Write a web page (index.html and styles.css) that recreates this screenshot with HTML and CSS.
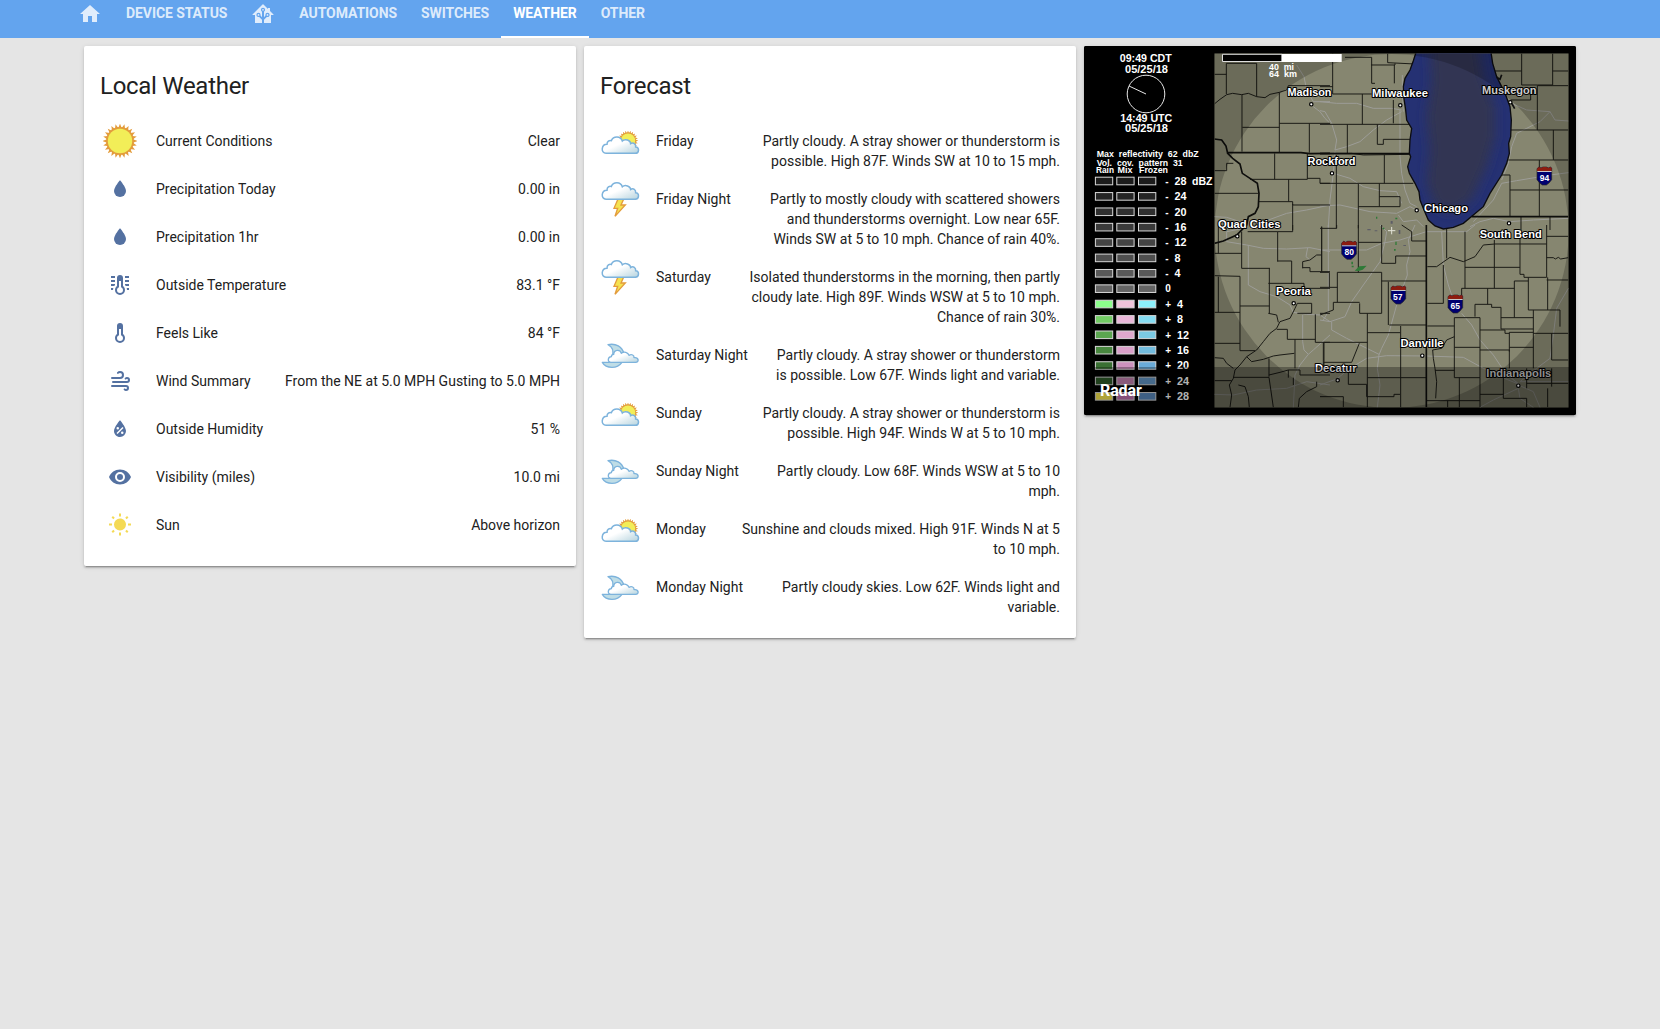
FILE: index.html
```html
<!DOCTYPE html>
<html lang="en">
<head>
<meta charset="utf-8">
<title>Home</title>
<link rel="stylesheet" href="styles.css">
</head>
<body>
<svg class="sprite" width="0" height="0" aria-hidden="true">
  <defs>
    <linearGradient id="cloudFill" x1="0" y1="0" x2="1" y2="1">
      <stop offset=".45" stop-color="#fff"/><stop offset="1" stop-color="#b5d3de"/>
    </linearGradient>
    <symbol id="water" viewBox="0 0 24 24"><path d="M12,20A6,6 0 0,1 6,14C6,10 12,3.25 12,3.25C12,3.25 18,10 18,14A6,6 0 0,1 12,20Z"/></symbol>
    <symbol id="thermometer" viewBox="0 0 24 24"><path d="M17,17A5,5 0 0,1 12,22A5,5 0 0,1 7,17C7,15.36 7.79,13.91 9,13V5A3,3 0 0,1 12,2A3,3 0 0,1 15,5V13C16.21,13.91 17,15.36 17,17M11,8V14.17C9.83,14.58 9,15.69 9,17A3,3 0 0,0 12,20A3,3 0 0,0 15,17C15,15.69 14.17,14.58 13,14.17V8H11Z"/></symbol>
    <symbol id="thermometer-lines" viewBox="0 0 24 24"><use href="#thermometer" width="24" height="24"/><path d="M3,3H7V5H3ZM3,7H7V9H3ZM3,11H7V12.1L6.2,13H3ZM3,15H5.3L5,17H3ZM17,3H21V5H17ZM17,7H21V9H17ZM17,11H21V13H17.8L17,12.1ZM18.7,15H21V17H19Z"/></symbol>
    <symbol id="wind" viewBox="0 0 24 24"><path d="M4,10A1,1 0 0,1 3,9A1,1 0 0,1 4,8H12A2,2 0 0,0 14,6A2,2 0 0,0 12,4C11.45,4 10.95,4.22 10.59,4.59C10.2,5 9.56,5 9.17,4.59C8.78,4.2 8.78,3.56 9.17,3.17C9.9,2.45 10.9,2 12,2A4,4 0 0,1 16,6A4,4 0 0,1 12,10H4M19,12A1,1 0 0,0 20,11A1,1 0 0,0 19,10C18.72,10 18.47,10.11 18.29,10.29C17.9,10.68 17.27,10.68 16.88,10.29C16.5,9.9 16.5,9.27 16.88,8.88C17.42,8.34 18.17,8 19,8A3,3 0 0,1 22,11A3,3 0 0,1 19,14H5A1,1 0 0,1 4,13A1,1 0 0,1 5,12H19M18,18H4A1,1 0 0,1 3,17A1,1 0 0,1 4,16H18A3,3 0 0,1 21,19A3,3 0 0,1 18,22C17.17,22 16.42,21.66 15.88,21.12C15.5,20.73 15.5,20.1 15.88,19.71C16.27,19.32 16.9,19.32 17.29,19.71C17.47,19.89 17.72,20 18,20A1,1 0 0,0 19,19A1,1 0 0,0 18,18Z"/></symbol>
    <symbol id="humidity" viewBox="0 0 24 24"><path fill-rule="evenodd" d="M12,3.25C12,3.25 6,10 6,14C6,17.32 8.69,20 12,20A6,6 0 0,0 18,14C18,10 12,3.25 12,3.25M14.47,9.97L15.53,11.03L9.53,17.03L8.47,15.97M9.75,10A1.25,1.25 0 0,1 11,11.25A1.25,1.25 0 0,1 9.75,12.5A1.25,1.25 0 0,1 8.5,11.25A1.25,1.25 0 0,1 9.75,10M14.25,14.5A1.25,1.25 0 0,1 15.5,15.75A1.25,1.25 0 0,1 14.25,17A1.25,1.25 0 0,1 13,15.75A1.25,1.25 0 0,1 14.25,14.5Z"/></symbol>
    <symbol id="eye" viewBox="0 0 24 24"><path d="M12,9A3,3 0 0,0 9,12A3,3 0 0,0 12,15A3,3 0 0,0 15,12A3,3 0 0,0 12,9M12,17A5,5 0 0,1 7,12A5,5 0 0,1 12,7A5,5 0 0,1 17,12A5,5 0 0,1 12,17M12,4.5C7,4.5 2.73,7.61 1,12C2.73,16.39 7,19.5 12,19.5C17,19.5 21.27,16.39 23,12C21.27,7.61 17,4.5 12,4.5Z"/></symbol>
    <symbol id="sun" viewBox="0 0 24 24"><path d="M3.55,18.54L4.96,19.95L6.76,18.16L5.34,16.74M11,22.45C11.32,22.45 13,22.45 13,22.45V19.5H11M12,5.5A6,6 0 0,0 6,11.5A6,6 0 0,0 12,17.5A6,6 0 0,0 18,11.5C18,8.18 15.31,5.5 12,5.5M20,12.5H23V10.5H20M17.24,18.16L19.04,19.95L20.45,18.54L18.66,16.74M20.45,4.46L19.04,3.05L17.24,4.84L18.66,6.26M13,0.55H11V3.5H13M4,10.5H1V12.5H4M6.76,4.84L4.96,3.05L3.55,4.46L5.34,6.26L6.76,4.84Z"/></symbol>
    <symbol id="burst" viewBox="-50 -50 100 100">
      <circle r="41" fill="#e39c3c"/>
      <g fill="#e39c3c"><path id="ray" d="M-5 -38L0 -51L5 -38ZM-5 38L0 51L5 38ZM-38 -5L-51 0L-38 5ZM38 -5L51 0L38 5Z"/><use href="#ray" transform="rotate(15)"/><use href="#ray" transform="rotate(30)"/><use href="#ray" transform="rotate(45)"/><use href="#ray" transform="rotate(60)"/><use href="#ray" transform="rotate(75)"/></g>
      <circle r="36" fill="#f2ee58"/>
    </symbol>
    <symbol id="cloud" viewBox="0 0 120 120"><path d="M18 97C2 97 3 70 21 70C21 61 28 57 34 59C40 44 62 44 67 60C75 52 92 58 92 68C100 63 108 69 107 78C119 78 118 97 106 97Z" fill="url(#cloudFill)" stroke="#7db3dc" stroke-width="4.500"/></symbol>
    <symbol id="partly" viewBox="0 0 120 120"><use href="#burst" x="54" y="29" width="60" height="60"/><use href="#cloud" width="120" height="120"/></symbol>
    <symbol id="storm" viewBox="0 0 120 120"><path d="M55 58L42 88H53L45 112L76 78H63L72 58Z" fill="#f5e350" stroke="#e39c3c" stroke-width="4"/><use href="#cloud" y="-36.500" width="120" height="120"/></symbol>
    <symbol id="night" viewBox="0 0 120 120"><g stroke="#7db3dc" stroke-width="4" stroke-linejoin="round"><path d="M24 29C48 24 66 35 72 56L36 66C42 50 38 36 24 29Z" fill="#bfdde6"/><path d="M7 82H66C58 93 48 97 36 97C22 97 12 91 7 82Z" fill="#bfdde6"/><path d="M33 82C22 82 22 66 34 65C34 60 38 58 41 58C42 44 60 42 64 55C72 48 84 52 87 61C95 56 103 61 102 68C117 66 118 82 107 82Z" fill="url(#cloudFill)"/></g></symbol>
  </defs>
</svg>

<header class="toolbar">
  <nav class="tabs">
    <a class="tab"><svg class="tab-icon" viewBox="0 0 24 24"><path d="M10,20V14H14V20H19V12H22L12,3L2,12H5V20H10Z"/></svg></a>
    <a class="tab">Device Status</a>
    <a class="tab"><svg class="tab-icon" viewBox="0 0 24 24"><path d="M21.8,13H20V21H13V17.67L15.79,14.88L16.5,15C17.66,15 18.6,14.06 18.6,12.9C18.6,11.74 17.66,10.8 16.5,10.8A2.1,2.1 0 0,0 14.4,12.9L14.5,13.61L13,15.13V9.65C13.66,9.29 14.1,8.6 14.1,7.8A2.1,2.1 0 0,0 12,5.7A2.1,2.1 0 0,0 9.9,7.8C9.9,8.6 10.34,9.29 11,9.65V15.13L9.5,13.61L9.6,12.9A2.1,2.1 0 0,0 7.5,10.8A2.1,2.1 0 0,0 5.4,12.9A2.1,2.1 0 0,0 7.5,15L8.21,14.88L11,17.67V21H4V13H2.25C1.83,13 1.42,13 1.42,12.79C1.43,12.57 1.85,12.15 2.28,11.72L11,3C11.33,2.67 11.67,2.33 12,2.33C12.33,2.33 12.67,2.67 13,3L17,7V6H19V9L21.78,11.78C22.18,12.18 22.59,12.59 22.6,12.8C22.6,13 22.2,13 21.8,13M7.5,12A0.9,0.9 0 0,1 8.4,12.9A0.9,0.9 0 0,1 7.5,13.8A0.9,0.9 0 0,1 6.6,12.9A0.9,0.9 0 0,1 7.5,12M16.5,12C17,12 17.4,12.4 17.4,12.9C17.4,13.4 17,13.8 16.5,13.8A0.9,0.9 0 0,1 15.6,12.9A0.9,0.9 0 0,1 16.5,12M12,6.9C12.5,6.9 12.9,7.3 12.9,7.8C12.9,8.3 12.5,8.7 12,8.7C11.5,8.7 11.1,8.3 11.1,7.8C11.1,7.3 11.5,6.9 12,6.9Z"/></svg></a>
    <a class="tab">Automations</a>
    <a class="tab">Switches</a>
    <a class="tab selected">Weather</a>
    <a class="tab">Other</a>
  </nav>
</header>

<main class="columns">
  <section class="card">
    <h1 class="card-title">Local Weather</h1>
    <div class="rows">
      <div class="row"><span class="badge"><svg class="picture burst"><use href="#burst"/></svg></span><span class="name">Current Conditions</span><span class="value">Clear</span></div>
      <div class="row"><span class="badge"><svg class="icon"><use href="#water"/></svg></span><span class="name">Precipitation Today</span><span class="value">0.00 in</span></div>
      <div class="row"><span class="badge"><svg class="icon"><use href="#water"/></svg></span><span class="name">Precipitation 1hr</span><span class="value">0.00 in</span></div>
      <div class="row"><span class="badge"><svg class="icon"><use href="#thermometer-lines"/></svg></span><span class="name">Outside Temperature</span><span class="value">83.1 °F</span></div>
      <div class="row"><span class="badge"><svg class="icon"><use href="#thermometer"/></svg></span><span class="name">Feels Like</span><span class="value">84 °F</span></div>
      <div class="row"><span class="badge"><svg class="icon"><use href="#wind"/></svg></span><span class="name">Wind Summary</span><span class="value">From the NE at 5.0 MPH Gusting to 5.0 MPH</span></div>
      <div class="row"><span class="badge"><svg class="icon"><use href="#humidity"/></svg></span><span class="name">Outside Humidity</span><span class="value">51 %</span></div>
      <div class="row"><span class="badge"><svg class="icon"><use href="#eye"/></svg></span><span class="name">Visibility (miles)</span><span class="value">10.0 mi</span></div>
      <div class="row"><span class="badge"><svg class="icon active"><use href="#sun"/></svg></span><span class="name">Sun</span><span class="value">Above horizon</span></div>
    </div>
  </section>

  <section class="card">
    <h1 class="card-title">Forecast</h1>
    <div class="rows">
      <div class="row"><span class="badge"><svg class="picture"><use href="#partly"/></svg></span><span class="name">Friday</span><span class="value">Partly cloudy. A stray shower or thunderstorm is<br>possible. High 87F. Winds SW at 10 to 15 mph.</span></div>
      <div class="row"><span class="badge"><svg class="picture"><use href="#storm"/></svg></span><span class="name">Friday Night</span><span class="value">Partly to mostly cloudy with scattered showers<br>and thunderstorms overnight. Low near 65F.<br>Winds SW at 5 to 10 mph. Chance of rain 40%.</span></div>
      <div class="row"><span class="badge"><svg class="picture"><use href="#storm"/></svg></span><span class="name">Saturday</span><span class="value">Isolated thunderstorms in the morning, then partly<br>cloudy late. High 89F. Winds WSW at 5 to 10 mph.<br>Chance of rain 30%.</span></div>
      <div class="row"><span class="badge"><svg class="picture"><use href="#night"/></svg></span><span class="name">Saturday Night</span><span class="value">Partly cloudy. A stray shower or thunderstorm<br>is possible. Low 67F. Winds light and variable.</span></div>
      <div class="row"><span class="badge"><svg class="picture"><use href="#partly"/></svg></span><span class="name">Sunday</span><span class="value">Partly cloudy. A stray shower or thunderstorm is<br>possible. High 94F. Winds W at 5 to 10 mph.</span></div>
      <div class="row"><span class="badge"><svg class="picture"><use href="#night"/></svg></span><span class="name">Sunday Night</span><span class="value">Partly cloudy. Low 68F. Winds WSW at 5 to 10<br>mph.</span></div>
      <div class="row"><span class="badge"><svg class="picture"><use href="#partly"/></svg></span><span class="name">Monday</span><span class="value">Sunshine and clouds mixed. High 91F. Winds N at 5<br>to 10 mph.</span></div>
      <div class="row"><span class="badge"><svg class="picture"><use href="#night"/></svg></span><span class="name">Monday Night</span><span class="value">Partly cloudy skies. Low 62F. Winds light and<br>variable.</span></div>
    </div>
  </section>

  <section class="card radar">
    <svg class="radar-image" viewBox="1084 46 492 369">
      <defs>
        <clipPath id="mapClip"><rect x="1214.500" y="53.500" width="354" height="354"/></clipPath>
        <path id="lakeShape" d="M287 30L287 40L280 62L270 90L255 115L250 140L251 170L257 210L260 240L275 265L270 300L268 340L272 350L263 380L268 400L285 430L297 455L300 480L312 510L325 540L345 558L370 567L400 562L430 550L460 525L490 500L510 460L545 405L560 370L568 340L566 310L572 290L574 240L570 200L555 160L530 110L518 70L512 30Z"/>
        <clipPath id="lakeClip"><use href="#lakeShape"/></clipPath>
        <filter id="soft" x="-30%" y="-30%" width="160%" height="160%"><feGaussianBlur stdDeviation="16"/></filter>
        <g id="shield"><path d="M2 3L6 0L12 3L18 0H28L34 3L40 0L44 3V38L36 48L28 54H16L8 48L0 38V6Z" fill="#000070" stroke="#222" stroke-width="2"/><path d="M2 3L6 0L12 3L18 0H28L34 3L40 0L44 3V12H0V6Z" fill="#8c1c10"/><path d="M1 13.500H44" stroke="#ccc" stroke-width="3"/></g>
      </defs>
      <rect x="1084" y="46" width="492" height="369" fill="#000"/>
      <g clip-path="url(#mapClip)">
        <rect x="1214" y="53" width="355" height="355" fill="#868670"/>
        <g class="roads">
          <path transform="translate(1080 40) scale(.33333)" d="M650 75L672 110L680 150L700 185H750M700 200L720 215L735 235L748 248M403 530L440 532L480 545M565 540L620 520L680 510L750 495"/>
          <path transform="translate(1080 225) scale(.33333)" d="M500 0L490 10L440 20V50M440 50L500 60L550 70L620 72L690 68L750 80M505 60V180L540 200L590 215L630 240L640 262L680 268L720 270L750 290M668 270V350L672 375L685 388L700 375L750 330M685 388L660 420L645 450L640 547M403 508L460 510L530 495L620 490L680 470L750 480M683 68L678 95L690 105M745 0V80"/>
          <path transform="translate(1320 40) scale(.33333)" d="M0 185L50 190L110 190L160 205L215 205L245 210M245 215L200 240L160 270L120 305L80 320L45 330L50 300L35 250L15 215L0 212M240 210V350L245 400L255 450L270 490L290 500M247 105V150L250 215M45 335L40 400L30 480L25 560M40 400L90 415L130 440L180 452L230 455L245 490M0 498L60 495L150 515L230 520L270 500L300 515M235 525L250 545L290 540L310 560M575 190L620 210L690 215L660 245L620 265L590 280L575 320L565 370L545 420M690 215L705 240L745 243M460 545L520 480L545 430L590 422L650 412M690 405L745 398M450 560L480 545L520 535L570 545L640 540L745 535"/>
          <path transform="translate(1320 225) scale(.33333)" d="M25 0V260L10 285M0 285L30 290L75 275L95 230L130 180L180 110L195 50M0 75H140L185 55L240 45L319 20L440 20L465 0M180 0L200 20L195 50M285 0L265 45L270 80L260 120L262 150L230 240L205 330L185 370L177 390L172 430L180 480L172 547M35 290V315L80 340L177 388M0 480L50 462L90 430L140 400L200 392L320 393L430 397L490 430L540 455L590 475M365 20L370 120L385 180L405 240M425 265L455 300L480 345L520 390L560 450L595 475M595 490L520 525L480 547M595 490L600 520L640 547M745 190L710 250L700 330L690 400L650 430L600 470H745M595 480L560 440M595 480L640 500L660 547"/>
        </g>
        <g class="counties">
          <path transform="translate(1080 40) scale(.33333)" d="M439 162V70H530V170M403 103H439M403 192L420 178L440 164L458 160L485 164L505 160L530 170L555 173L570 163L598 157L620 150L625 137H750M486 164V335M487 262H598M598 157V338M598 250H750M688 250V338M584 340V418M510 418H682M682 340V418M682 415H720V430H750M626 418V485M403 460H535M403 392H440V370H460M537 485H638V495H750M638 492V570"/>
          <path transform="translate(1080 225) scale(.33333)" d="M485 20V130M503 20H593V110M593 108H635V175M485 130H570M568 130V265M565 175H672V190H750M403 85H485M403 152L480 154V377M480 243H568M415 155V262M403 262H480M415 0V85M668 130V110L690 105L710 90H725M725 5V138M668 128H690V140H750M403 355H480M480 377H525M638 0V20H593M590 313H622V343H706M706 268V352M645 343V430M720 265H750M565 265L590 270L595 292M652 235H695V265H652M652 235L645 250L630 280L600 290L590 310L570 325L550 350L530 375L500 395L480 420L465 435L460 460L448 480L455 510L450 547M500 395L515 410L550 403L580 393L600 390L643 385M567 400V455M403 398L430 400L440 415L460 430M460 457H567L580 547M567 450L600 442L625 435H660V450H750M625 435V458M403 467H455M475 480L495 485L505 515L508 547M655 547L658 520L680 500L710 485V470M706 352H750M730 352V430M640 458V480"/>
          <path transform="translate(1320 40) scale(.33333)" d="M38 40V162M0 140H38M38 162H155M127 162V253M75 52H155V130H165M153 75H225V70M203 40V68L285 72M223 75V130M220 180V250M0 253H270M82 253V340M172 253V313H190V298H270M0 340H95L130 345L270 343M193 345V430M115 430H280M49 345V565M0 430H115V565M178 430V500M115 500H240V470M178 470H240M524 93H605M605 40V135H652M698 40V135H652M698 93H745M652 137H745M652 137V270M572 270H745M700 270V360M572 180H632V160M565 360H745M658 360V528M570 450H745M545 405H570V528M603 530V570M690 530V570"/>
          <path transform="translate(1320 225) scale(.33333)" d="M5 5V140M0 142H28V187M0 187H52M52 232V142H185V265M50 0V10H0M115 0V142M115 52H185M185 0V115H227V93H319M185 168H319M205 170V300M208 300H319M245 0L275 20V48H319M119 235V265H185M40 232H119M0 270L40 255V232M142 265V547M142 323H242V303M242 323V547M142 458H319M12 430V352H142M12 412H95L118 355M85 430V478H140V515H222V508H240M0 515H70V547M380 0V100M370 120V235H322M322 125H350L390 97L430 110L465 95L490 60L525 57H680M435 20V190M435 127H600M523 45V190M600 40V148H612V157H680M680 0V157M680 34H745M680 98H700L706 102L715 97L722 102L745 98M680 165H745M425 235V190H583M583 278V168H625M625 157V255H720V305M683 157V255M503 190V238M465 275V238H515V247H543V312H640M403 458V278H480V458M322 303H403M543 278H640M640 255V430M480 315H555V325H568M568 380V322H640M568 367H640M403 367H480M480 375H568V430M640 325H745M695 325V405H745M403 458H480M418 458V547M480 458V547M383 527V547M345 436H403M403 335L380 345L365 370L338 375L340 400L345 430L350 470L347 520M319 527H480M480 508H550M550 458V520H620V547M620 430V490M620 475H745M695 430V485M683 490V547"/>
        </g>
        <g transform="translate(1320 40) scale(.33333)">
          <use href="#lakeShape" fill="#253173"/>
          <g clip-path="url(#lakeClip)"><path d="M325 -20L335 120L320 230L330 330L320 430L345 500L395 520L455 480L500 380L525 290L525 200L490 110L470 -20Z" fill="#303653" filter="url(#soft)"/></g>
          <use href="#lakeShape" fill="none" stroke="#0c0c10" stroke-width="4"/>
          <path d="M530 112L540 118L545 104M572 185L578 195L584 206" fill="none" stroke="#111" stroke-width="5"/>
        </g>
        <g class="borders">
          <path transform="translate(1080 40) scale(.33333)" d="M403 297L425 300L438 318L443 340L458 355L480 372L487 400L510 415L532 430L537 460L535 500L525 520L505 530L500 555L490 565L470 585L430 603L403 610M440 338H663L690 341L750 340"/>
          <path transform="translate(1320 40) scale(.33333)" d="M0 341H270M455 530H745"/>
          <path transform="translate(1320 225) scale(.33333)" d="M319 0V547"/>
        </g>
        <g transform="translate(1320 225) scale(.33333)" fill="#2f7a38">
          <path d="M104 137L118 124L140 122L128 134L116 138Z"/><path d="M94 110h5v8h-5zM188 8h5v5h-5zM226 50h4v10h-4zM222 72h5v5h-5zM168 -25h4v6h-4zM226 -22h6v5h-6zM95 122h6v5h-6z"/><path fill="#5d5d66" d="M142 12h10v4h-10zM164 16h8v3h-8zM250 60h8v3h-8zM236 15h5v12h-5zM212 -12h6v8h-6z"/>
          <path d="M215 6V28M204 17H226" stroke="#e4e4d8" stroke-width="3"/>
        </g>
        <path fill-rule="evenodd" fill="#000" fill-opacity=".2" d="M1214 53H1570V408H1214ZM1391.700 54A177 177 0 0 0 1391.700 408A177 177 0 0 0 1391.700 54Z"/>
        <g id="cities"></g>
        <g transform="translate(1537 167) scale(.33333)"><use href="#shield"/></g>
        <g transform="translate(1341.700 241.300) scale(.33333)"><use href="#shield"/></g>
        <g transform="translate(1391 286) scale(.33333)"><use href="#shield"/></g>
        <g transform="translate(1448 295) scale(.33333)"><use href="#shield"/></g>
        <g class="route"><text x="1539.800" y="181">94</text><text x="1344.500" y="255">80</text><text x="1393" y="300">57</text><text x="1450.600" y="309">65</text></g>
      </g>
      <path d="M1222.500 54.300H1282V61.500H1222.500Z" fill="#000" stroke="#ddd"/>
      <path d="M1281.700 54H1341.700V62H1281.700Z" fill="#fff"/>
      <g class="mono">
        <text x="1119.800" y="62" textLength="52" lengthAdjust="spacingAndGlyphs">09:49 CDT</text>
        <text x="1125" y="72.700" textLength="43" lengthAdjust="spacingAndGlyphs">05/25/18</text>
        <text x="1120.300" y="121.700" textLength="52" lengthAdjust="spacingAndGlyphs">14:49 UTC</text>
        <text x="1125" y="132.400" textLength="43" lengthAdjust="spacingAndGlyphs">05/25/18</text>
      </g>
      <g class="mono small">
        <text x="1096.700" y="156.700" textLength="102" lengthAdjust="spacingAndGlyphs">Max&#160; reflectivity&#160; 62&#160; dbZ</text>
        <text x="1096.700" y="165.800" textLength="86" lengthAdjust="spacingAndGlyphs">Vol.&#160; cov.&#160; pattern&#160; 31</text>
        <text x="1096" y="173.300" textLength="18" lengthAdjust="spacingAndGlyphs">Rain</text><text x="1117.500" y="173.300" textLength="15" lengthAdjust="spacingAndGlyphs">Mix</text><text x="1139" y="173.300" textLength="29" lengthAdjust="spacingAndGlyphs">Frozen</text>
        <text x="1269" y="69.500" textLength="25" lengthAdjust="spacingAndGlyphs">40&#160; mi</text><text x="1269" y="77.200" textLength="28" lengthAdjust="spacingAndGlyphs">64&#160; km</text>
      </g>
      <g fill="none" stroke="#e8e8e8"><circle cx="1146" cy="94" r="18.800"/><path d="M1146 94L1129 86"/></g>
      <g id="legend"></g>
    </svg>
    <div class="caption">Radar</div>
  </section>
</main>
<script src="script.js"></script>
</body>
</html>
```
FILE: styles.css
```css
* { box-sizing: border-box; }

body {
  margin: 0;
  min-height: 100vh;
  background: #e5e5e5;
  color: #212121;
  font-family: Roboto, "Liberation Sans", sans-serif;
  font-size: 14px;
  line-height: 20px;
}

.sprite { display: block; }

.toolbar {
  display: flex;
  align-items: flex-end;
  height: 38px;
  padding-left: 66px;
  overflow: hidden;
  background: #63a4ee;
}

.tabs { display: flex; height: 48px; }

.tab {
  display: flex;
  align-items: center;
  padding: 0 12px 1px;
  border-bottom: 2px solid transparent;
  border-top: 1px solid transparent;
  color: rgba(255, 255, 255, .8);
  font-weight: 700;
  letter-spacing: -.08px;
  text-transform: uppercase;
  white-space: nowrap;
}

.tab.selected { color: #fff; border-bottom-color: #fff; }

.tab-icon { width: 24px; height: 24px; margin-top: 1px; fill: currentColor; }

.columns {
  display: grid;
  grid-template-columns: repeat(3, 492px);
  align-items: start;
  justify-content: center;
  gap: 8px;
  padding-top: 8px;
}

.card {
  background: #fff;
  border-radius: 2px;
  box-shadow: 0 2px 2px 0 rgba(0, 0, 0, .14), 0 1px 5px 0 rgba(0, 0, 0, .12), 0 3px 1px -2px rgba(0, 0, 0, .2);
}

.card-title {
  margin: 0;
  padding: 20px 16px 15px;
  font-size: 24px;
  font-weight: 400;
  line-height: 40px;
  letter-spacing: -.012em;
}

.rows {
  display: flex;
  flex-direction: column;
  gap: 8px;
  padding: 0 16px 21px;
}

.row { display: flex; min-height: 40px; }

.badge {
  display: flex;
  flex: none;
  align-items: center;
  justify-content: center;
  width: 40px;
  height: 40px;
  margin-right: 16px;
}

.icon { width: 24px; height: 24px; fill: #5471a1; }
.icon.active { fill: #f4da55; }
.picture { width: 40px; height: 40px; }
.picture.burst { width: 34px; height: 34px; }

.name, .value { padding-top: 10px; white-space: nowrap; }
.value { margin-left: auto; text-align: right; }

.radar { position: relative; height: 369px; overflow: hidden; background: #000; }
.radar-image { display: block; width: 492px; height: 369px; }

.caption {
  position: absolute;
  inset: auto 0 0;
  padding: 0 16px;
  background: rgba(0, 0, 0, .3);
  color: #fff;
  font-size: 16px;
  font-weight: 700;
  letter-spacing: -.1px;
  line-height: 48px;
}

.roads path { fill: none; stroke: #9d9d98; stroke-width: 3; }
.counties path { fill: none; stroke: #1b1b16; stroke-width: 3; }
.borders path { fill: none; stroke: #0e0e0c; stroke-width: 5; }

.mono, .city, .route {
  font-family: "Liberation Sans", sans-serif;
  font-weight: 700;
  fill: #fff;
}

.mono { font-size: 10px; }
.mono.small { font-size: 8.4px; }
.city { font-size: 10.5px; stroke: #000; stroke-width: 2px; paint-order: stroke; stroke-linejoin: round; }
.route { font-size: 8.5px; }
```
FILE: script.js
```js
const NS = "http://www.w3.org/2000/svg";

function add(parent, tag, attrs, text) {
  const node = document.createElementNS(NS, tag);
  for (const key in attrs) node.setAttribute(key, attrs[key]);
  if (text) {
    node.textContent = text;
    if (attrs.textLength) node.setAttribute("lengthAdjust", "spacingAndGlyphs");
  }
  parent.appendChild(node);
}

// Reflectivity scale: label and the rain / mix / frozen colours.
const scale = [
  ["- 28 dBZ", "#1c1c1c"], ["- 24", "#252525"], ["- 20", "#303030"], ["- 16", "#3a3a3a"],
  ["- 12", "#444"], ["- 8", "#4e4e4e"], ["- 4", "#595959"], ["0", "#646464"],
  ["+ 4", "#8cff8c", "#efc4da", "#8cf0fb"],
  ["+ 8", "#72cc64", "#e9b6d8", "#85dcf2"],
  ["+ 12", "#5ba650", "#dfa9cd", "#7bcae4"],
  ["+ 16", "#48873f", "#d99fc8", "#72bbdd"],
  ["+ 20", "#3a7033", "#cc91bd", "#6aabd8"],
  ["+ 24", "#305e2c", "#c583b1", "#6599c8"],
  ["+ 28", "#f9ea4f", "#c072ae", "#5a89bc"]
];
const legend = document.getElementById("legend");
scale.forEach(([label, ...fills], i) => {
  const y = 177.2 + i * 15.38;
  [1095.4, 1116.8, 1138.5].forEach((x, k) => {
    add(legend, "rect", { x, y, width: 17.3, height: 7.6, fill: fills[k] || fills[0], stroke: "#d8d8d8", "stroke-width": 1 });
  });
  const [sign, value, unit] = label.split(" ");
  const base = y + 7.6;
  add(legend, "text", { class: "mono", x: 1165.3, y: base }, sign);
  if (value) add(legend, "text", { class: "mono", x: sign === "-" ? 1174.5 : 1177, y: base, textLength: value.length * 6 }, value);
  if (unit) add(legend, "text", { class: "mono", x: 1192, y: base, textLength: 20.5 }, unit);
});

// City name, label x, baseline, label width, marker x, marker y.
const cities = [
  ["Madison", 1287.5, 96, 44, 1311.3, 104.3],
  ["Milwaukee", 1372, 96.5, 56, 1400.3, 105.3],
  ["Muskegon", 1482, 93.7, 54.5, 1510.3, 102.3],
  ["Rockford", 1307.5, 164.5, 48, 1332, 173.3],
  ["Chicago", 1424, 211.5, 44, 1416.7, 210.3],
  ["Quad Cities", 1218, 227.5, 62.5, 1237.3, 236.3],
  ["South Bend", 1479.7, 237.7, 62, 1509, 223.3],
  ["Peoria", 1276, 295, 35, 1293.7, 303.3],
  ["Danville", 1400.5, 346.5, 43, 1422.3, 355.7],
  ["Decatur", 1315, 371.5, 41.5, 1337.7, 380.3],
  ["Indianapolis", 1486.3, 376.7, 65, 1518.3, 385.7]
];
const layer = document.getElementById("cities");
cities.forEach(([name, x, y, width, cx, cy]) => {
  const fill = name === "Muskegon" || name === "Indianapolis" ? "#ccc" : "#fff";
  add(layer, "circle", { cx, cy, r: 1.7, fill: "#fff", stroke: "#000", "stroke-width": 1.2 });
  add(layer, "text", { class: "city", x, y, textLength: width, style: "fill:" + fill }, name);
});
```
